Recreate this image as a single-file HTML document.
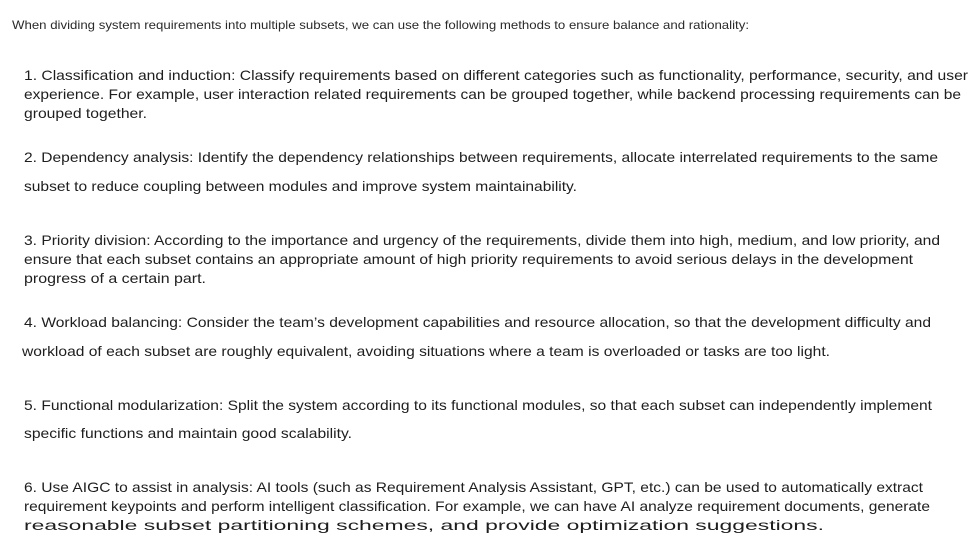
<!DOCTYPE html>
<html><head><meta charset="utf-8"><style>
html,body{margin:0;padding:0;background:#fff;width:973px;height:553px;overflow:hidden}
svg text{font-family:"Liberation Sans",sans-serif;fill:#1e1e1e;font-size:14px}
svg text.h{font-size:12px;fill:#2a2a2a}
</style></head><body>
<svg width="973" height="553" xmlns="http://www.w3.org/2000/svg">
<text class="h" x="12" y="29" textLength="737" lengthAdjust="spacingAndGlyphs">When dividing system requirements into multiple subsets, we can use the following methods to ensure balance and rationality:</text>
<text x="24" y="80" textLength="944" lengthAdjust="spacingAndGlyphs">1. Classification and induction: Classify requirements based on different categories such as functionality, performance, security, and user</text>
<text x="24" y="99" textLength="937" lengthAdjust="spacingAndGlyphs">experience. For example, user interaction related requirements can be grouped together, while backend processing requirements can be</text>
<text x="24" y="118" textLength="123" lengthAdjust="spacingAndGlyphs">grouped together.</text>
<text x="24" y="162" textLength="914" lengthAdjust="spacingAndGlyphs">2. Dependency analysis: Identify the dependency relationships between requirements, allocate interrelated requirements to the same</text>
<text x="24" y="191" textLength="553" lengthAdjust="spacingAndGlyphs">subset to reduce coupling between modules and improve system maintainability.</text>
<text x="24" y="245" textLength="916" lengthAdjust="spacingAndGlyphs">3. Priority division: According to the importance and urgency of the requirements, divide them into high, medium, and low priority, and</text>
<text x="24" y="264" textLength="889" lengthAdjust="spacingAndGlyphs">ensure that each subset contains an appropriate amount of high priority requirements to avoid serious delays in the development</text>
<text x="24" y="283" textLength="182" lengthAdjust="spacingAndGlyphs">progress of a certain part.</text>
<text x="24" y="327" textLength="907" lengthAdjust="spacingAndGlyphs">4. Workload balancing: Consider the team’s development capabilities and resource allocation, so that the development difficulty and</text>
<text x="22" y="356" textLength="808" lengthAdjust="spacingAndGlyphs">workload of each subset are roughly equivalent, avoiding situations where a team is overloaded or tasks are too light.</text>
<text x="24" y="410" textLength="908" lengthAdjust="spacingAndGlyphs">5. Functional modularization: Split the system according to its functional modules, so that each subset can independently implement</text>
<text x="24" y="438" textLength="328" lengthAdjust="spacingAndGlyphs">specific functions and maintain good scalability.</text>
<text x="24" y="492" textLength="899" lengthAdjust="spacingAndGlyphs">6. Use AIGC to assist in analysis: AI tools (such as Requirement Analysis Assistant, GPT, etc.) can be used to automatically extract</text>
<text x="24" y="511" textLength="906" lengthAdjust="spacingAndGlyphs">requirement keypoints and perform intelligent classification. For example, we can have AI analyze requirement documents, generate</text>
<text x="24" y="530" textLength="800" lengthAdjust="spacingAndGlyphs">reasonable subset partitioning schemes, and provide optimization suggestions.</text>
</svg>
</body></html>
